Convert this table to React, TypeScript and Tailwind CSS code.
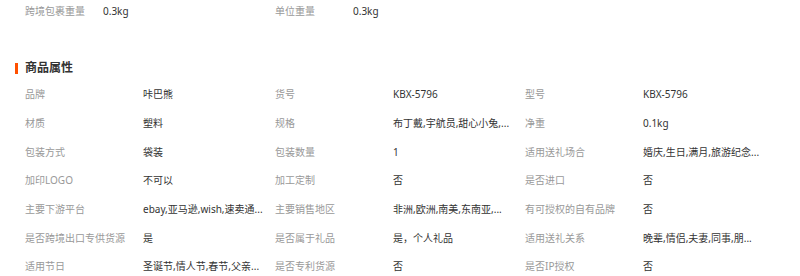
import React from "react";

const rows: [string, string][][] = [
  [["品牌", "咔巴熊"], ["货号", "KBX-5796"], ["型号", "KBX-5796"]],
  [["材质", "塑料"], ["规格", "布丁戴,宇航员,甜心小兔,..."], ["净重", "0.1kg"]],
  [["包装方式", "袋装"], ["包装数量", "1"], ["适用送礼场合", "婚庆,生日,满月,旅游纪念..."]],
  [["加印LOGO", "不可以"], ["加工定制", "否"], ["是否进口", "否"]],
  [["主要下游平台", "ebay,亚马逊,wish,速卖通..."], ["主要销售地区", "非洲,欧洲,南美,东南亚,..."], ["有可授权的自有品牌", "否"]],
  [["是否跨境出口专供货源", "是"], ["是否属于礼品", "是，个人礼品"], ["适用送礼关系", "晚辈,情侣,夫妻,同事,朋..."]],
  [["适用节日", "圣诞节,情人节,春节,父亲..."], ["是否专利货源", "否"], ["是否IP授权", "否"]],
];

export default function App() {
  return (
    <div
      className="w-[800px] h-[276px] bg-white overflow-hidden text-[10px]"
      style={{ fontFamily: '"Noto Sans", "Noto Sans CJK SC", sans-serif' }}
    >
      <div className="flex h-[22px] items-center pl-[25px]">
        <div className="flex w-[250px]">
          <span className="w-[78px] text-[#999]">跨境包裹重量</span>
          <span className="text-[#333]">0.3kg</span>
        </div>
        <div className="flex w-[250px]">
          <span className="w-[78px] text-[#999]">单位重量</span>
          <span className="text-[#333]">0.3kg</span>
        </div>
      </div>
      <div className="mt-[39px] flex h-[14px] items-center pl-[15px]">
        <div className="h-[11px] w-[3px] bg-[#ff5000]" />
        <span className="ml-[7px] text-[12px] font-bold text-[#333]">商品属性</span>
      </div>
      <div className="mt-[5.5px] pl-[25px]">
        {rows.map((row, i) => (
          <div key={i} className="flex h-[28.67px] items-center">
            {row.map(([k, v], j) => (
              <div key={j} className="flex w-[250px]">
                <span className="w-[118px] shrink-0 whitespace-nowrap text-[#999]">{k}</span>
                <span className="whitespace-nowrap text-[#333]">{v}</span>
              </div>
            ))}
          </div>
        ))}
      </div>
    </div>
  );
}
